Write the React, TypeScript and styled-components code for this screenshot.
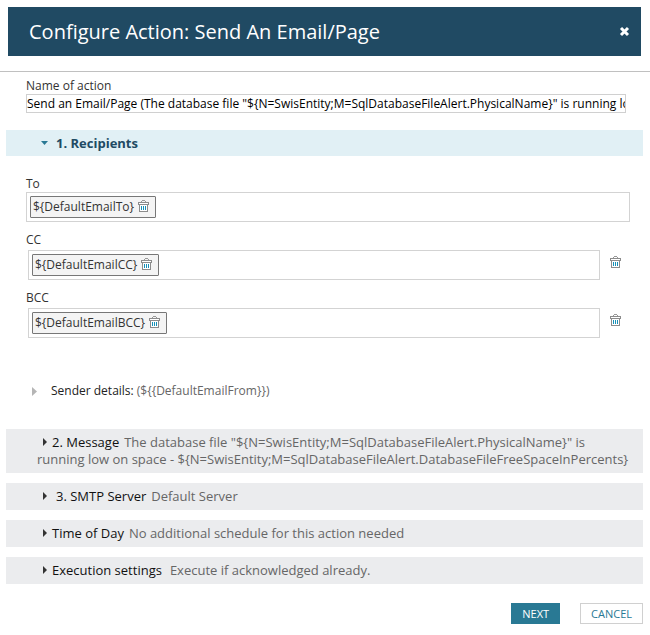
import React, { useState } from "react";
import styled, { createGlobalStyle } from "styled-components";

const GlobalStyle = createGlobalStyle`
  * { box-sizing: border-box; }
  body {
    margin: 0;
    background: #fff;
    color: #333;
    font: 12px/16px "Open Sans", sans-serif;
  }
  button, input { font: inherit; }
`;

const Dialog = styled.main`
  padding-top: 7px;
`;

const TitleBar = styled.header`
  display: flex;
  align-items: center;
  justify-content: space-between;
  height: 49px;
  margin: 0 9px 15px 8px;
  padding: 0 11px 0 21px;
  background: #204a63;
  color: #fff;
`;

const Title = styled.h1`
  margin: 0;
  font-size: 20px;
  line-height: 28px;
  font-weight: 400;
`;

const IconButton = styled.button`
  display: flex;
  flex: none;
  padding: 0;
  border: 0;
  background: none;
  color: inherit;
  cursor: pointer;
`;

const Content = styled.div`
  padding: 6px 7px 0 6px;
  border-top: 1px solid #c0c0c0;
`;

const NameField = styled.div`
  display: flex;
  flex-direction: column;
  padding: 0 17px 0 20px;
  margin-bottom: 17px;
`;

const Label = styled.label`
  align-self: flex-start;
  color: #333;
`;

const NameInput = styled.input`
  width: 100%;
  height: 19px;
  padding: 0;
  border: 1px solid #d0d0d0;
  background: #fff;
  color: #000;
`;

const SectionToggle = styled.button<{ $open?: boolean }>`
  display: block;
  width: 100%;
  padding: ${(p) => (p.$open ? "4px 8px 4px 35px" : "5px 8px 5px 31px")};
  border: 0;
  background: ${(p) => (p.$open ? "#e1f0f5" : "#ebecee")};
  color: #666;
  font-size: 13px;
  line-height: ${(p) => (p.$open ? "18px" : "17px")};
  text-align: left;
  cursor: pointer;
`;

const Caret = styled.svg<{ $open?: boolean }>`
  margin-left: ${(p) => (p.$open ? "0" : "6px")};
  margin-right: ${(p) => (p.$open ? "8px" : "5px")};
  vertical-align: ${(p) => (p.$open ? "3px" : "1px")};
`;

const SectionName = styled.span<{ $open?: boolean; $spaced?: boolean; $wide?: boolean }>`
  margin-left: ${(p) => (p.$spaced ? "4px" : "0")};
  margin-right: ${(p) => (p.$wide ? "8px" : "5px")};
  color: ${(p) => (p.$open ? "#204a63" : "#111")};
  font-weight: ${(p) => (p.$open ? 700 : 400)};
`;

const Recipients = styled.div`
  display: flex;
  flex-direction: column;
  gap: 10px;
  padding: 20px 13px 0 20px;
`;

const Field = styled.div`
  display: flex;
  flex-direction: column;
`;

const FieldRow = styled.div<{ $removable?: boolean }>`
  display: flex;
  align-items: flex-start;
  gap: 10px;
  padding: ${(p) => (p.$removable ? "2px 9px 0 2px" : "0")};
`;

const RecipientBox = styled.div`
  display: flex;
  flex: 1;
  min-width: 0;
  gap: 4px;
  height: 30px;
  padding: 3px;
  border: 1px solid #d3d3d3;
`;

const Chip = styled.span`
  display: flex;
  flex: none;
  align-items: flex-start;
  gap: 4px;
  height: 22px;
  padding: 2px 6px 0 2px;
  border: 1px solid #777;
  border-radius: 1px;
  background: #f4f4f4;
`;

const RemoveRecipient = styled(IconButton)`
  padding-top: 1px;
`;

const RemoveField = styled(IconButton)`
  padding-top: 6px;
`;

const RecipientInput = styled.input`
  flex: 1;
  min-width: 0;
  padding: 0;
  border: 0;
  outline: 0;
  background: transparent;
`;

const SenderToggle = styled.button`
  display: flex;
  align-items: center;
  width: 100%;
  margin: 45px 0 30px;
  padding: 0 0 0 26px;
  border: 0;
  background: none;
  color: #666;
  text-align: left;
  cursor: pointer;
`;

const SenderName = styled.span`
  margin: 0 3px 0 14px;
  color: #222;
`;

const Sections = styled.div`
  display: flex;
  flex-direction: column;
  gap: 10px;
`;

const Footer = styled.footer`
  display: flex;
  justify-content: flex-end;
  gap: 20px;
  padding: 19px 0 11px;
`;

const ActionButton = styled.button<{ $primary?: boolean }>`
  height: 21px;
  padding: 0 10px;
  border: 1px solid ${(p) => (p.$primary ? "#297994" : "#d0d0d0")};
  background: ${(p) => (p.$primary ? "#297994" : "#fff")};
  color: ${(p) => (p.$primary ? "#fff" : "#297994")};
  font-size: 11px;
  font-weight: ${(p) => (p.$primary ? 500 : 400)};
  line-height: 17px;
  cursor: pointer;
`;

const TrashIcon = () => (
  <svg width="11" height="12" viewBox="0 0 11 12" shapeRendering="crispEdges" aria-hidden="true">
    <path d="M4 0h3v1H4zM3 1h1v1H3zM7 1h1v1H7z" fill="#999" />
    <path d="M0 2h11v3H0zM1 5h9v7H1z" fill="#8c8c8c" />
    <path d="M1 3h9v1H1zM2 5h7v6H2z" fill="#fff" />
    <path d="M3 6h1v4H3zM5 6h1v4H5zM7 6h1v4H7z" fill="#1590b8" />
  </svg>
);

const CloseIcon = () => (
  <svg width="11" height="11" viewBox="0 0 11 11" aria-hidden="true">
    <path d="M2 2l7 7M9 2l-7 7" stroke="currentColor" strokeWidth="3" />
  </svg>
);

const RightCaret = () => (
  <Caret width="4" height="8" viewBox="0 0 4 8" aria-hidden="true">
    <path d="M0 0l4 4-4 4z" fill="#333" />
  </Caret>
);

type RecipientFieldProps = { id: string; label: string; value: string; removable?: boolean };

const RecipientField = ({ id, label, value, removable }: RecipientFieldProps) => (
  <Field>
    <Label htmlFor={id}>{label}</Label>
    <FieldRow $removable={removable}>
      <RecipientBox>
        <Chip>
          {value}
          <RemoveRecipient type="button" aria-label={`Remove ${value}`}>
            <TrashIcon />
          </RemoveRecipient>
        </Chip>
        <RecipientInput id={id} />
      </RecipientBox>
      {removable && (
        <RemoveField type="button" aria-label={`Remove ${label}`}>
          <TrashIcon />
        </RemoveField>
      )}
    </FieldRow>
  </Field>
);

const sections = [
  {
    name: "2. Message",
    summary:
      'The database file "${N=SwisEntity;M=SqlDatabaseFileAlert.PhysicalName}" is running low on space - ${N=SwisEntity;M=SqlDatabaseFileAlert.DatabaseFileFreeSpaceInPercents}',
  },
  { name: "3. SMTP Server", summary: "Default Server", spaced: true },
  { name: "Time of Day", summary: "No additional schedule for this action needed" },
  { name: "Execution settings", summary: "Execute if acknowledged already.", wide: true },
];

export default function App() {
  const [name, setName] = useState(
    'Send an Email/Page (The database file "${N=SwisEntity;M=SqlDatabaseFileAlert.PhysicalName}" is running low on space)'
  );

  return (
    <>
      <GlobalStyle />
      <Dialog>
        <TitleBar>
          <Title>Configure Action: Send An Email/Page</Title>
          <IconButton type="button" aria-label="Close">
            <CloseIcon />
          </IconButton>
        </TitleBar>
        <Content>
          <NameField>
            <Label htmlFor="action-name">Name of action</Label>
            <NameInput id="action-name" value={name} onChange={(e) => setName(e.target.value)} />
          </NameField>
          <SectionToggle type="button" $open aria-expanded="true">
            <Caret $open width="7" height="4" viewBox="0 0 7 4" aria-hidden="true">
              <path d="M0 0h7L3.500 4z" fill="#297994" />
            </Caret>
            <SectionName $open>1. Recipients</SectionName>
          </SectionToggle>
          <Recipients>
            <RecipientField id="to" label="To" value="${DefaultEmailTo}" />
            <RecipientField id="cc" label="CC" value="${DefaultEmailCC}" removable />
            <RecipientField id="bcc" label="BCC" value="${DefaultEmailBCC}" removable />
          </Recipients>
          <SenderToggle type="button" aria-expanded="false">
            <svg width="5" height="9" viewBox="0 0 5 9" aria-hidden="true">
              <path d="M0 0l5 4.500-5 4.500z" fill="#b5b5b5" />
            </svg>
            <SenderName>Sender details:</SenderName>
            {"(${{DefaultEmailFrom}})"}
          </SenderToggle>
          <Sections>
            {sections.map((s) => (
              <SectionToggle key={s.name} type="button" aria-expanded="false">
                <RightCaret />
                <SectionName $spaced={s.spaced} $wide={s.wide}>
                  {s.name}
                </SectionName>
                {s.summary}
              </SectionToggle>
            ))}
          </Sections>
          <Footer>
            <ActionButton type="button" $primary>
              NEXT
            </ActionButton>
            <ActionButton type="button">CANCEL</ActionButton>
          </Footer>
        </Content>
      </Dialog>
    </>
  );
}
